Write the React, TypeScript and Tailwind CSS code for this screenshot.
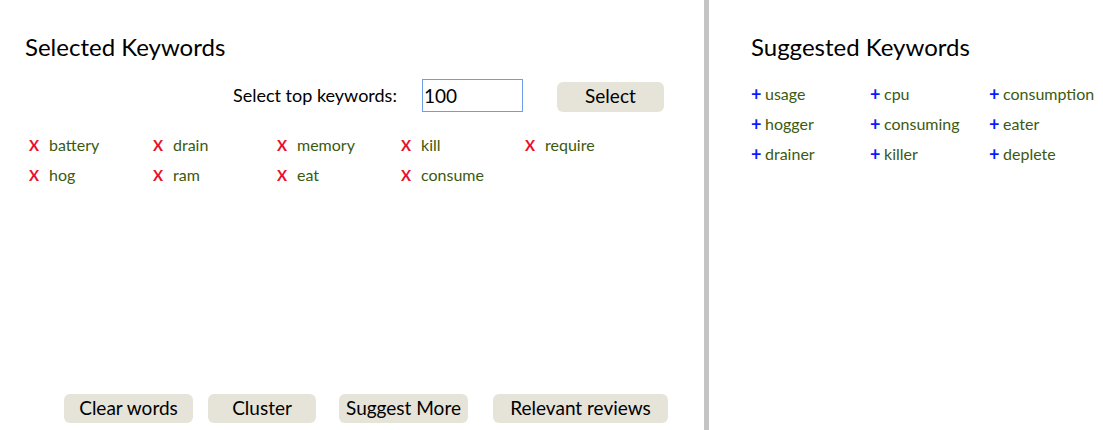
import { useState } from 'react'

const selected = ['battery', 'drain', 'memory', 'kill', 'require', 'hog', 'ram', 'eat', 'consume']
const suggested = ['usage', 'cpu', 'consumption', 'hogger', 'consuming', 'eater', 'drainer', 'killer', 'deplete']

export default function App() {
  const [top, setTop] = useState('100')

  return (
    <div className="flex h-[430px] w-[1103px] overflow-hidden bg-white text-black" style={{ fontFamily: 'Lato, "Open Sans", sans-serif' }}>
      {/* left panel */}
      <div className="flex w-[704px] shrink-0 flex-col">
        <h2 className="ml-[25px] mt-[33px] text-[24px] leading-7 font-normal">Selected Keywords</h2>

        <div className="mt-[17px] flex items-center">
          <span className="ml-[233px] text-[18px]">Select top keywords:</span>
          <input
            className="ml-[25px] mt-[1px] h-[33px] w-[101px] border border-[#6d9eeb] px-[1px] text-[19px] outline-none"
            value={top}
            onChange={(e) => setTop(e.target.value)}
          />
          <button className="ml-[34px] mt-[3px] h-[30px] w-[107px] rounded-md bg-[#e6e3d8] text-[19px]">Select</button>
        </div>

        <div className="ml-[29px] mt-[18px] grid grid-cols-[124px_124px_124px_124px_124px]">
          {selected.map((w) => (
            <div key={w} className="flex h-[30px] items-center text-[16px]">
              <span className="w-[20px] text-[15px] font-bold text-[#e8102c]">X</span>
              <span className="text-[#3b5a10]">{w}</span>
            </div>
          ))}
        </div>

        <div className="mt-auto mb-[7px] flex whitespace-nowrap text-[19px]">
          <button className="ml-[64px] h-[29px] w-[129px] rounded-md bg-[#e6e3d8]">Clear words</button>
          <button className="ml-[15px] h-[29px] w-[108px] rounded-md bg-[#e6e3d8]">Cluster</button>
          <button className="ml-[23px] h-[29px] w-[129px] rounded-md bg-[#e6e3d8]">Suggest More</button>
          <button className="ml-[25px] h-[29px] w-[175px] rounded-md bg-[#e6e3d8]">Relevant reviews</button>
        </div>
      </div>

      {/* divider */}
      <div className="w-[5px] shrink-0 bg-[#c4c4c4]" />

      {/* right panel */}
      <div className="flex flex-1 flex-col">
        <h2 className="ml-[42px] mt-[33px] text-[24px] leading-7 font-normal">Suggested Keywords</h2>
        <div className="ml-[42px] mt-[18px] grid grid-cols-[119px_119px_119px]">
          {suggested.map((w) => (
            <div key={w} className="flex h-[30px] items-center text-[16px]">
              <span className="w-[14px] text-[18px] leading-none font-bold text-[#0a1aff]">+</span>
              <span className="text-[#3b5a10]">{w}</span>
            </div>
          ))}
        </div>
      </div>
    </div>
  )
}
